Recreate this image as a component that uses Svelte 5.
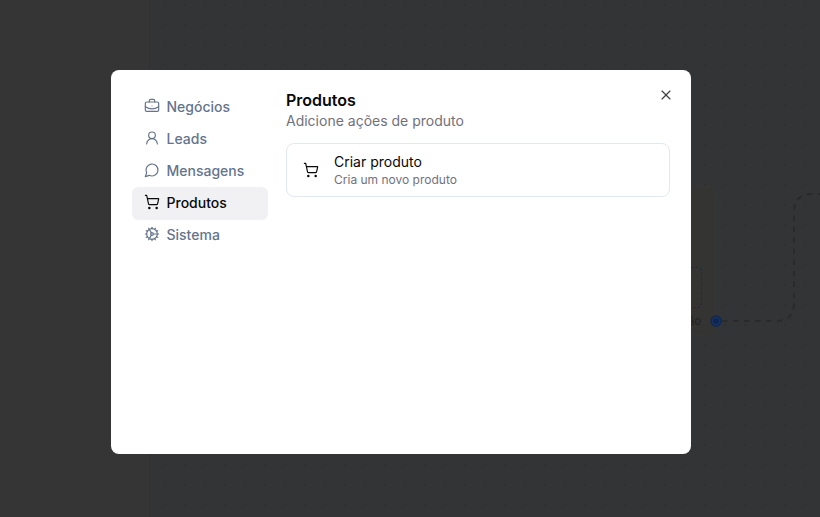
<script>
  const nav = [
    { label: 'Negócios', icon: 'briefcase' },
    { label: 'Leads', icon: 'user' },
    { label: 'Mensagens', icon: 'message' },
    { label: 'Produtos', icon: 'cart', active: true },
    { label: 'Sistema', icon: 'cog' }
  ];
</script>

{#snippet icon(name, size)}
  <svg class="icon" width={size} height={size} viewBox="0 0 24 24" fill="none" stroke="currentColor" stroke-width="1.75" stroke-linecap="round" stroke-linejoin="round">
    {#if name === 'briefcase'}
      <path d="M12 12h.01" /><path d="M16 6V4a2 2 0 0 0-2-2h-4a2 2 0 0 0-2 2v2" /><path d="M22 13a18.15 18.15 0 0 1-20 0" /><rect x="2" y="6" width="20" height="14" rx="2" />
    {:else if name === 'user'}
      <circle cx="12" cy="8" r="5" /><path d="M20 21a8 8 0 0 0-16 0" />
    {:else if name === 'message'}
      <path d="M7.9 20A9 9 0 1 0 4 16.1L2 22Z" />
    {:else if name === 'cart'}
      <circle cx="8" cy="21" r="1" /><circle cx="19" cy="21" r="1" /><path d="M2.05 2.05h2l2.66 12.42a2 2 0 0 0 2 1.58h9.78a2 2 0 0 0 1.95-1.57l1.65-7.43H5.12" />
    {:else if name === 'cog'}
      <path d="M12 20a8 8 0 1 0 0-16 8 8 0 0 0 0 16Z" /><path d="M12 14a2 2 0 1 0 0-4 2 2 0 0 0 0 4Z" /><path d="M12 2v2" /><path d="M12 22v-2" /><path d="m17 20.66-1-1.73" /><path d="M11 10.27 7 3.34" /><path d="m20.66 17-1.73-1" /><path d="m3.34 7 1.73 1" /><path d="M14 12h8" /><path d="M2 12h2" /><path d="m20.66 7-1.73 1" /><path d="m3.34 17 1.73-1" /><path d="m17 3.34-1 1.73" /><path d="m11 13.73-4 6.93" />
    {:else if name === 'x'}
      <path d="M18 6 6 18" /><path d="m6 6 12 12" />
    {/if}
  </svg>
{/snippet}

<div class="screen">
  <div class="canvas">
    <aside class="rail"></aside>
    <div class="node">
      <div class="inner"></div>
      <span class="node-label">ão</span>
    </div>
    <svg class="edge" width="820" height="517" viewBox="0 0 820 517" fill="none">
      <path d="M722 321H776Q794 321 794 303V212Q794 194 812 194H820" stroke="#282a2c" stroke-width="2" stroke-dasharray="5.5 5.5" />
      <circle cx="716" cy="321" r="5.5" fill="#0e2752" stroke="#1c2c4a" stroke-width="1" />
      <circle cx="716" cy="321" r="3.8" fill="#0e2752" stroke="#24396a" stroke-width="0.8" />
    </svg>
  </div>

  <div class="overlay">
    <div class="modal">
      <nav class="nav">
        {#each nav as item}
          <div class="nav-item" class:active={item.active}>
            {@render icon(item.icon, 16)}
            <span>{item.label}</span>
          </div>
        {/each}
      </nav>
      <main class="content">
        <h2>Produtos</h2>
        <p class="sub">Adicione ações de produto</p>
        <div class="card">
          <span class="card-icon">{@render icon('cart', 16)}</span>
          <div class="card-text">
            <div class="card-title">Criar produto</div>
            <div class="card-desc">Cria um novo produto</div>
          </div>
        </div>
      </main>
      <button class="close" aria-label="Fechar">{@render icon('x', 16)}</button>
    </div>
  </div>
</div>

<style>
  :global(body) {
    margin: 0;
    background: #323436;
    font-family: Inter, "Liberation Sans", sans-serif;
  }
  .screen {
    position: relative;
    width: 820px;
    height: 517px;
    overflow: hidden;
    background: #323436;
  }
  .canvas {
    position: absolute;
    inset: 0;
    background-image: radial-gradient(circle, #2e3032 0.8px, transparent 1px);
    background-size: 20px 20px;
    background-position: -5px -5px;
  }
  .rail {
    position: absolute;
    left: 0;
    top: 0;
    bottom: 0;
    width: 150px;
    box-sizing: border-box;
    background: #353535;
    border-right: 1px solid #313131;
  }
  .node {
    position: absolute;
    left: 560px;
    top: 186px;
    width: 156px;
    height: 150px;
    box-sizing: border-box;
    background: #343433;
    border: 1px solid #363636;
    border-radius: 8px;
  }
  .inner {
    position: absolute;
    left: 20px;
    top: 80px;
    width: 119px;
    height: 39px;
    border: 1px dashed #1b2c4e;
    border-radius: 4px;
  }
  .node-label {
    position: absolute;
    right: 14px;
    top: 127px;
    font-size: 11px;
    line-height: 14px;
    color: #232323;
  }
  .edge {
    position: absolute;
    left: 0;
    top: 0;
  }
  .overlay {
    position: absolute;
    inset: 0;
    display: flex;
    align-items: flex-start;
    padding: 70px 0 0 111px;
  }
  .modal {
    position: relative;
    display: flex;
    gap: 18px;
    width: 580px;
    height: 384px;
    box-sizing: border-box;
    padding: 20px 21px;
    background: #fff;
    border-radius: 8px;
  }
  .nav {
    display: flex;
    flex-direction: column;
    width: 136px;
    flex: none;
  }
  .nav-item {
    display: flex;
    align-items: center;
    gap: 8px;
    height: 32px;
    padding: 0 11px 0 12px;
    border-radius: 6px;
    font-size: 14px;
    font-weight: 500;
    color: #64748b;
  }
  .nav-item span {
    margin-left: -1px;
  }
  .nav-item .icon {
    margin-left: -0.5px;
  }
  .nav-item.active {
    height: 33px;
    box-sizing: border-box;
    padding-bottom: 3px;
    margin-top: 1px;
    margin-bottom: -2px;
    background: #f1f1f3;
    color: #09090b;
  }
  .icon {
    flex: none;
    display: block;
  }
  .content {
    flex: 1;
    min-width: 0;
    padding-top: 1px;
  }
  h2 {
    margin: 0;
    font-size: 16px;
    line-height: 18px;
    font-weight: 600;
    color: #09090b;
  }
  .sub {
    margin: 2px 0 0;
    font-size: 14px;
    line-height: 20px;
    color: #71717a;
  }
  .card {
    display: flex;
    align-items: center;
    gap: 15px;
    margin-top: 12px;
    height: 54px;
    box-sizing: border-box;
    padding: 0 16px;
    border: 1px solid #e2e8f0;
    border-radius: 8px;
    color: #09090b;
  }
  .card-icon {
    display: block;
    margin-left: -0.5px;
    margin-right: 0.5px;
  }
  .card-title {
    font-size: 14px;
    line-height: 18px;
  }
  .card-desc {
    font-size: 12px;
    line-height: 16px;
    margin-top: 1px;
    color: #71717a;
  }
  .close {
    position: absolute;
    top: 17px;
    right: 17px;
    width: 16px;
    height: 16px;
    padding: 0;
    border: 0;
    background: none;
    color: #3f3f46;
  }
</style>
